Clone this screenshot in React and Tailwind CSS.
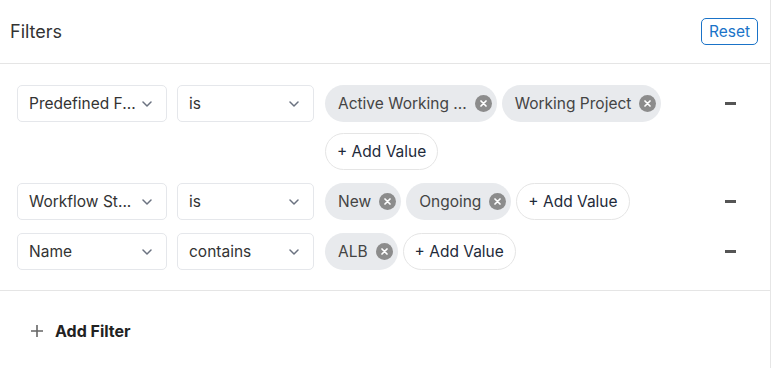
import React from "react";

const Chevron = () => (
  <svg width="10" height="6" viewBox="0 0 10 6" fill="none" className="shrink-0">
    <path d="M1 1l4 4 4-4" stroke="#6b7280" strokeWidth="1.5" strokeLinecap="round" strokeLinejoin="round" />
  </svg>
);

const Select = ({ label, w }) => (
  <div className={`${w} h-[37px] shrink-0 flex items-center justify-between pl-[11px] pr-[14px] border border-[#e5e7eb] rounded-[5px] bg-white text-[15.5px] text-[#333]`}>
    <span className="whitespace-nowrap">{label}</span>
    <Chevron />
  </div>
);

const Chip = ({ label }) => (
  <div className="h-[37px] flex items-center pl-[13px] pr-[5px] gap-[8px] rounded-full bg-[#e8eaed] text-[15.5px] text-[#444] whitespace-nowrap">
    <span>{label}</span>
    <span className="w-[17px] h-[17px] rounded-full bg-[#8c8c8c] flex items-center justify-center">
      <svg width="7" height="7" viewBox="0 0 7 7">
        <path d="M1 1l5 5M6 1l-5 5" stroke="white" strokeWidth="1.7" strokeLinecap="round" />
      </svg>
    </span>
  </div>
);

const AddValue = () => (
  <div className="h-[37px] flex items-center px-[11px] rounded-full border border-[#e5e5e5] bg-white text-[15.5px] text-[#1e2a3a] whitespace-nowrap">
    + Add Value
  </div>
);

const Minus = () => (
  <div className="w-[60px] h-[37px] flex items-center justify-center shrink-0">
    <div className="w-[11px] h-[2.5px] bg-[#555]" />
  </div>
);

const Row = ({ field, op, values }) => (
  <div className="flex items-start">
    <Select label={field} w="w-[150px]" />
    <div className="w-[10px]" />
    <Select label={op} w="w-[137px]" />
    <div className="w-[11px]" />
    <div className="flex-1 flex flex-wrap gap-x-[5px] gap-y-[11px]">
      {values.map((v) => (
        <Chip key={v} label={v} />
      ))}
      <AddValue />
    </div>
    <Minus />
    <div className="w-[10px]" />
  </div>
);

export default function App() {
  return (
    <div className="w-[771px] h-[368px] bg-white border-r border-[#e6e6e6] font-['Inter',sans-serif]">
      <div className="h-[64px] flex items-center justify-between pl-[10px] pr-[12px] border-b border-[#e5e5e5]">
        <span className="text-[18px] text-[#333]">Filters</span>
        <button className="h-[27px] px-[7px] border border-[#1a73c8] rounded-[5px] text-[15.5px] text-[#1a73c8] leading-none">
          Reset
        </button>
      </div>
      <div className="pt-[21px] pb-[20px] pl-[17px] flex flex-col gap-[13px] border-b border-[#e5e5e5]">
        <Row field="Predefined F..." op="is" values={["Active Working ...", "Working Project"]} />
        <Row field="Workflow St..." op="is" values={["New", "Ongoing"]} />
        <Row field="Name" op="contains" values={["ALB"]} />
      </div>
      <div className="h-[77px] flex items-center pt-[3px] pl-[31px] gap-[12px]">
        <svg width="12" height="12" viewBox="0 0 12 12">
          <path d="M6 0v12M0 6h12" stroke="#666" strokeWidth="1.6" />
        </svg>
        <span className="text-[16px] font-bold text-[#222]">Add Filter</span>
      </div>
    </div>
  );
}
